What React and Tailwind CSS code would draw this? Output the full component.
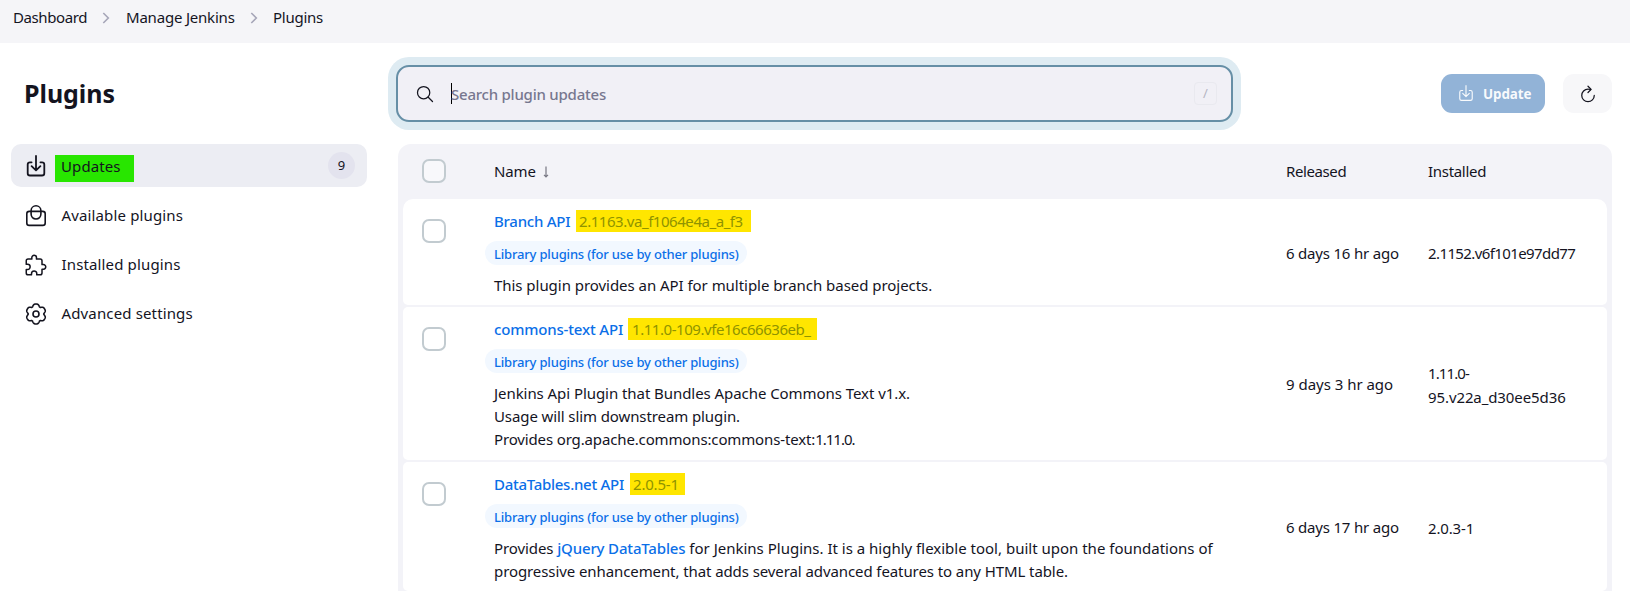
import React from "react";
import { IoExtensionPuzzleOutline, IoRefreshOutline, IoSearchOutline } from "react-icons/io5";

function DownloadIcon({ className, strokeWidth = 1.8 }) {
  return (
    <svg viewBox="0 0 24 24" className={className} fill="none" stroke="currentColor" strokeWidth={strokeWidth} strokeLinecap="round" strokeLinejoin="round">
      <path d="M7.6 7.3H6a2.3 2.3 0 0 0-2.3 2.3v8.6A2.3 2.3 0 0 0 6 20.5h12a2.3 2.3 0 0 0 2.3-2.3V9.6A2.3 2.3 0 0 0 18 7.3h-1.6" />
      <path d="M12 .9v14.3M7.6 11.1l4.4 4.3 4.4-4.3" />
    </svg>
  );
}

function BagIcon() {
  return (
    <svg viewBox="0 0 24 24" className="size-6" fill="none" stroke="currentColor" strokeWidth="1.6">
      <rect x="2.8" y="7.4" width="18.4" height="14" rx="2.4" />
      <rect x="7.1" y="1.8" width="9.8" height="13.2" rx="4.9" />
    </svg>
  );
}

// Outline of a six-lobed gear, sampled in polar coordinates
const GEAR_PATH =
  Array.from({ length: 120 }, (_, i) => {
    const a = (i * Math.PI) / 60;
    const r = 9.15 + 1.1 * Math.cos(6 * a) - 0.3 * Math.cos(12 * a);
    return `${i ? "L" : "M"}${(12 + r * Math.sin(a)).toFixed(2)} ${(12 - r * Math.cos(a)).toFixed(2)}`;
  }).join("") + "Z";

function GearIcon() {
  return (
    <svg viewBox="0 0 24 24" className="size-6" fill="none" stroke="currentColor" strokeWidth="1.6" strokeLinejoin="round">
      <path d={GEAR_PATH} />
      <circle cx="12" cy="12" r="3" />
    </svg>
  );
}

function Chevron() {
  return (
    <svg viewBox="0 0 8 12" className="h-3 w-2" fill="none" stroke="#a6a6b8" strokeWidth="1.6">
      <path d="M1.3 1l5 5-5 5" />
    </svg>
  );
}

function Checkbox() {
  return <span className="block size-6 rounded-[7px] border-2 border-[#c2cbd0] bg-white/40" />;
}

function Row({ className, title, titleClass, version, versionClass, released, installed, children }) {
  return (
    <div className={`flex rounded-[5px] bg-white ${className}`}>
      <div className="w-[91px] shrink-0 pt-5 pl-[19px]">
        <Checkbox />
      </div>
      <div className="w-[792px] shrink-0 pt-[11px]">
        <div className="flex h-[22px] items-center whitespace-nowrap">
          <span className={`font-medium text-[#0b6fe8] ${titleClass}`}>{title}</span>
          <span className={`flex h-[22px] items-center bg-[#ffe600] text-[#8f9300] ${versionClass}`}>{version}</span>
        </div>
        <div className="mt-[9px] -ml-[9px] flex h-6 w-[262px] items-center rounded-full bg-[#f2f8ff] pt-[3px] pl-[9px] text-[13px] font-medium tracking-[-0.18px] whitespace-nowrap text-[#0b6fe8]">
          Library plugins (for use by other plugins)
        </div>
        <div className="mt-[9px] leading-[23px]">{children}</div>
      </div>
      <div className="flex w-[142px] shrink-0 items-center pt-0.5 tracking-[-0.2px]">{released}</div>
      <div className="flex items-center pt-0.5 leading-6">{installed}</div>
    </div>
  );
}

const NAV = "flex h-[43px] items-center pl-[13px]";
const NAV_LABEL = "ml-[13.5px] tracking-[0.14px]";

export default function App() {
  return (
    <div className="h-[591px] w-[1630px] overflow-hidden bg-white font-['Noto_Sans',sans-serif] text-[15px] text-[#14141f]">
      <nav className="flex h-[43px] items-center bg-[#f5f5f8] pb-2 pl-[13px]">
        <span className="w-[89px] tracking-[-0.4px]">Dashboard</span>
        <span className="w-6"><Chevron /></span>
        <span className="w-[124px] tracking-[-0.2px]">Manage Jenkins</span>
        <span className="w-[23px]"><Chevron /></span>
        <span className="tracking-[-0.25px]">Plugins</span>
      </nav>
      <div className="flex">
        <aside className="w-[387px] shrink-0 pt-px pl-[11px]">
          <h1 className="mb-[34px] h-[66px] pt-[32px] pl-[13px] text-[25px] leading-[34px] font-bold tracking-[-0.05px]">Plugins</h1>
          <div className="flex w-[356px] flex-col gap-1.5">
            <div className={`${NAV} rounded-[10px] bg-[#ecedf3] pr-3`}>
              <DownloadIcon className="mt-0.5 size-6" />
              <span className="mt-[5px] ml-[7px] flex h-[27px] w-[79px] items-center bg-[#28e600] pb-1 pl-1.5 tracking-[0.1px]">Updates</span>
              <span className="ml-auto flex size-[27px] items-center justify-center rounded-full bg-[#e3e3ee] pt-px text-[13px]">9</span>
            </div>
            <div className={`${NAV} pt-0.5`}><BagIcon /><span className={NAV_LABEL}>Available plugins</span></div>
            <div className={`${NAV} pt-0.5`}><IoExtensionPuzzleOutline className="size-6" /><span className={NAV_LABEL}>Installed plugins</span></div>
            <div className={`${NAV} pt-0.5`}><GearIcon /><span className={NAV_LABEL}>Advanced settings</span></div>
          </div>
        </aside>
        <main className="w-[1225px] pt-[22px] pl-[9px]">
          <div className="flex h-[57px] items-center">
            <div className="flex h-[57px] w-[837px] items-center rounded-[13px] border-2 border-[#668fa6] bg-[#f1f0f6] pr-3.5 pl-[17px] shadow-[0_0_0_8px_#deebf2]">
              <IoSearchOutline className="size-5" />
              <span className="-mr-px mb-px ml-4 h-[21px] w-px bg-black" />
              <span className="pt-0.5 font-medium tracking-[-0.23px] text-[#77778f]">Search plugin updates</span>
              <span className="ml-auto flex size-[23px] items-center justify-center rounded border border-[#e9e9ef] text-[13px] text-[#b5b5c3]">/</span>
            </div>
            <button className="ml-[208px] flex h-[39px] w-[104px] items-center rounded-[11px] bg-[#92b3d7] pl-4 text-[13.4px] font-bold text-white/95">
              <DownloadIcon className="size-[18px]" strokeWidth={1.5} />
              <span className="ml-2 pt-0.5 tracking-[-0.1px]">Update</span>
            </button>
            <button className="ml-[18px] flex h-[39px] w-[49px] items-center justify-center rounded-[11px] bg-[#f7f7f9]">
              <IoRefreshOutline className="size-5" />
            </button>
          </div>
          <div className="mt-[22px] ml-0.5 flex w-[1214px] flex-col gap-0.5 rounded-t-[13px] bg-[#f3f3f8] px-[5px]">
            <div className="-mb-0.5 flex h-[55px] items-center">
              <div className="w-[91px] pb-0.5 pl-[19px]"><Checkbox /></div>
              <div className="flex w-[792px] items-center gap-1.5">
                <span className="tracking-[-0.1px]">Name</span>
                <svg viewBox="0 0 8 12" className="h-3 w-2" fill="none" stroke="#777783" strokeWidth="1.2"><path d="M4 .5v10M2 8.800L4 10.800l2-2" /></svg>
              </div>
              <span className="w-[142px] tracking-[-0.4px]">Released</span>
              <span className="tracking-[-0.3px]">Installed</span>
            </div>
            <Row
              className="h-[106px] rounded-t-[10px]"
              title="Branch API" titleClass="w-[82px] tracking-[-0.26px]"
              version="2.1163.va_f1064e4a_a_f3" versionClass="w-[175px] pl-[3px] tracking-[-0.45px]"
              released="6 days 16 hr ago" installed={<span className="tracking-[-0.6px]">2.1152.v6f101e97dd77</span>}
            >
              <span className="tracking-[-0.04px]">This plugin provides an API for multiple branch based projects.</span>
            </Row>
            <Row
              className="h-[153px]"
              title="commons-text API" titleClass="w-[134px] tracking-[-0.17px]"
              version="1.11.0-109.vfe16c66636eb_" versionClass="w-[189px] pl-[4px] tracking-[-0.45px]"
              released={<span className="tracking-[-0.02px]">9 days 3 hr ago</span>}
              installed={<span><span className="tracking-[-0.9px]">1.11.0-</span><br /><span className="tracking-[-0.1px]">95.v22a_d30ee5d36</span></span>}
            >
              <div className="tracking-[-0.06px]">Jenkins Api Plugin that Bundles Apache Commons Text v1.x.</div>
              <div className="tracking-[-0.1px]">Usage will slim downstream plugin.</div>
              <div className="tracking-[-0.14px]">Provides org.apache.commons:commons-text:<span className="tracking-[-1px]">1.11.0.</span></div>
            </Row>
            <Row
              className="h-[129px]"
              title="DataTables.net API" titleClass="w-[136px] tracking-[-0.28px]"
              version="2.0.5-1" versionClass="w-[55px] pl-[3px] tracking-[-0.2px]"
              released="6 days 17 hr ago" installed={<span className="tracking-[-0.15px]">2.0.3-1</span>}
            >
              <div className="whitespace-nowrap">
                <span className="tracking-[-0.09px]">Provides </span><span className="font-medium tracking-[-0.16px] text-[#0b6fe8]">jQuery DataTables</span> for Jenkins Plugins. It is a highly flexible tool, built upon the foundations of
              </div>
              <div className="tracking-[-0.09px] whitespace-nowrap">progressive enhancement, that adds several advanced features to any HTML table.</div>
            </Row>
          </div>
        </main>
      </div>
    </div>
  );
}
